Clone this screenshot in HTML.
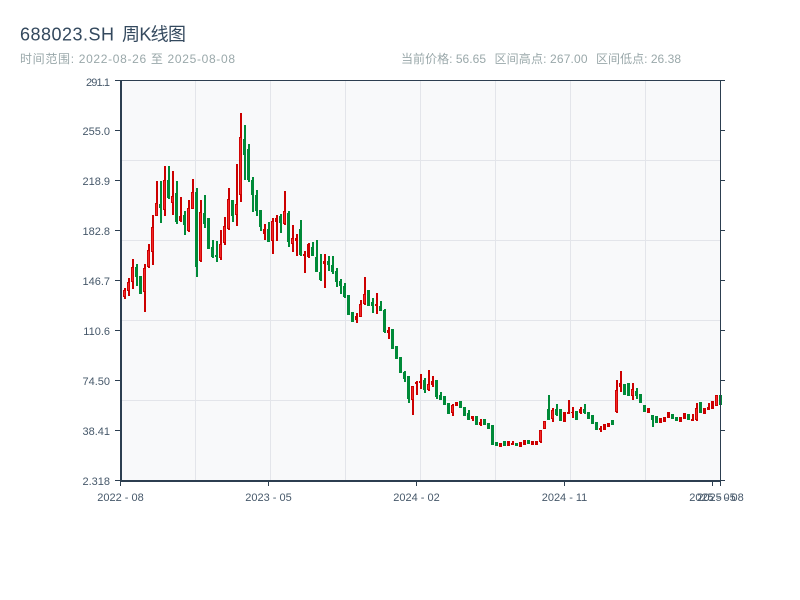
<!DOCTYPE html>
<html><head><meta charset="utf-8"><title>688023.SH 周K线图</title>
<style>
html,body{margin:0;padding:0;background:#fff;width:800px;height:600px;overflow:hidden}
svg{display:block}
text{font-family:"Liberation Sans","Noto Sans CJK SC",sans-serif}
.y{font-size:11px;fill:#46586a;text-anchor:end}
.x{font-size:11px;fill:#46586a;text-anchor:middle}
.s{font-size:12px;fill:#9aa8aa}
.t{font-size:18px;fill:#34495e}
</style></head><body>
<svg width="800" height="600" viewBox="0 0 800 600" xmlns="http://www.w3.org/2000/svg">
<rect width="800" height="600" fill="#fff"/>
<text class="t" x="20" y="40.5" textLength="94">688023.SH</text>
<text class="t" x="122" y="40.5" textLength="64">周K线图</text>
<text class="s" x="20" y="63" textLength="215">时间范围: 2022-08-26 至 2025-08-08</text>
<text class="s" x="401" y="63" textLength="85">当前价格: 56.65</text>
<text class="s" x="494.5" y="63" textLength="93">区间高点: 267.00</text>
<text class="s" x="596" y="63" textLength="85">区间低点: 26.38</text>

<rect x="121" y="81" width="599" height="399" fill="#f8f9fa"/>
<path d="M195.5 81V480M270.5 81V480M345.5 81V480M420.5 81V480M495.5 81V480M570.5 81V480M645.5 81V480M121 160.5H720M121 240.5H720M121 320.5H720M121 400.5H720" stroke="#e3e5ea" stroke-width="1" fill="none"/>

<g fill="none">
<path transform="translate(1 0)" stroke="#cc0000" stroke-width="2" d="M124 288V299M128 278V296M132 259V289M144 264V312M148 244V268M152 215V265M156 181V216M164 166V216M172 171V215M180 197V222M188 200V232M192 179V209M200 200V262M220 230V260M224 217V245M228 188V230M236 164V226M240 113V202M264 224V240M272 218V254M276 215V241M284 191V225M292 225V252M296 234V256M304 251V273M308 243V258M324 254V288M356 313V323M360 300V317M364 277V305M376 293V314M388 327V339M412 386V415M416 381V395M420 374V389M428 370V391M432 376V387M452 404V416M456 402V406M472 416V421M480 419V426M500 443V447M508 441V446M512 441V445M520 442V447M524 440V445M532 441V445M536 441V445M540 430V443M544 421V429M552 408V422M564 412V422M568 400V414M572 407V418M580 407V414M600 426V432M604 424V430M608 423V427M616 380V413M620 371V392M632 383V400M648 408V413M660 418V423M664 417V422M668 412V418M680 417V422M684 413V419M692 414V421M696 403V421M704 408V414M708 403V410M712 401V409M716 395V406"/>
<path transform="translate(0.5 0)" stroke="#cc0000" stroke-width="3" d="M124 290V297M128 282V291M132 267V282M144 268V292M148 250V267M152 227V252M156 203V216M164 180V210M172 196V203M180 216V221M188 208V231M192 192V209M200 212V261M220 244V258M224 226V243M228 199V229M236 204V215M240 137V195M264 229V234M272 221V241M276 218V222M284 211V224M292 238V244M296 238V241M304 254V256M308 244V257M324 261V264M356 316V320M360 304V317M364 294V304M376 304V306M388 330V333M412 386V400M416 382V384M420 381V383M428 384V390M432 381V385M452 405V413M456 402V406M472 416V419M480 422V425M500 443V447M508 441V446M512 443V445M520 442V447M524 440V445M532 441V445M536 441V445M540 430V442M544 421V429M552 410V419M564 412V422M568 412V414M572 412V413M580 409V413M600 428V430M604 424V430M608 423V427M616 390V412M620 383V387M632 389V396M648 408V413M660 418V423M664 417V422M668 412V418M680 417V422M684 413V419M692 419V421M696 408V420M704 408V414M708 407V410M712 401V409M716 395V406"/>
<path transform="translate(0.5 0)" stroke="#f02828" stroke-width="1.2" d="M124 291V296M128 283V290M132 268V281M144 269V291M148 251V266M152 228V251M156 204V215M164 181V209M172 197V202M188 209V230M192 193V208M200 213V260M220 245V257M224 227V242M228 200V228M236 205V214M240 138V194M272 222V240M284 212V223M292 239V243M360 305V316M364 295V303M412 387V399M428 385V389M452 406V412M540 431V441M544 422V428M552 411V418M616 391V411M632 390V395M696 409V419M716 396V405"/>
<path transform="translate(1 0)" stroke="#008a38" stroke-width="2" d="M120 264V295M136 264V286M140 276V294M160 181V223M168 166V199M176 181V224M184 211V235M196 188V277M204 195V228M208 218V249M212 240V258M216 241V262M232 200V222M244 125V180M248 144V182M252 177V212M256 190V216M260 210V231M268 222V242M280 214V233M288 211V247M300 220V256M312 242V256M316 240V272M320 254V281M328 256V271M332 256V274M336 268V287M340 279V294M344 283V298M348 295V315M352 312V322M368 290V306M372 298V313M380 301V311M384 309V333M392 329V349M396 346V359M400 357V373M404 371V382M408 376V403M424 378V393M436 380V399M440 392V400M444 396V405M448 403V414M460 401V408M464 407V416M468 410V420M476 416V425M484 419V425M488 423V429M492 425V445M496 442V446M504 441V446M516 443V446M528 440V444M548 395V420M556 404V416M560 409V421M576 411V420M584 404V414M588 412V419M592 415V424M596 422V430M612 420V425M624 384V395M628 383V396M636 388V399M640 394V403M644 405V412M652 415V427M656 416V423M672 414V419M676 417V421M688 414V420M700 402V413M720 395V405"/>
<path transform="translate(0.5 0)" stroke="#008a38" stroke-width="3" d="M136 267V277M140 276V294M160 204V208M168 180V198M176 193V222M184 215V225M196 192V267M204 213V224M208 218V249M212 247V257M216 255V257M232 200V216M244 139V155M248 149V180M252 180V195M256 195V211M260 210V227M268 229V242M280 216V223M288 213V242M300 229V255M312 247V256M316 257V272M320 272V280M328 261V265M332 265V272M336 271V282M340 281V286M344 286V297M348 295V315M352 312V322M368 290V306M372 302V306M380 306V311M384 310V332M392 329V349M396 346V359M400 357V373M404 372V379M408 376V399M424 380V390M436 380V397M440 395V400M444 396V405M448 403V414M460 401V408M464 407V416M468 413V420M476 416V425M484 419V425M488 423V429M492 425V445M496 442V446M504 441V446M516 443V446M528 440V444M548 409V420M556 409V415M560 409V421M576 411V420M584 409V413M588 412V419M592 415V424M596 422V430M612 420V425M624 384V395M628 383V396M636 391V396M640 394V403M644 405V412M652 415V420M656 416V423M672 414V419M676 417V421M688 414V420M700 402V413M720 395V405"/>
</g>

<rect x="120" y="80" width="601" height="1" fill="#2c3e50"/>
<rect x="720" y="80" width="1" height="402" fill="#2c3e50"/>
<rect x="120" y="80" width="2" height="402" fill="#2c3e50"/>
<rect x="120" y="480" width="601" height="2" fill="#2c3e50"/>
<path stroke="#2c3e50" stroke-width="1" fill="none" d="M115 80.5H120M115 130.5H120M115 180.5H120M115 230.5H120M115 280.5H120M115 330.5H120M115 380.5H120M115 430.5H120M115 480.5H120M721 80.5H725M721 130.5H725M721 180.5H725M721 230.5H725M721 280.5H725M721 330.5H725M721 380.5H725M721 430.5H725M721 480.5H725M120.5 482V486M268.5 482V486M416.5 482V486M564.5 482V486M712.5 482V486M720.5 482V486"/>

<text class="y" x="110" y="86" textLength="24">291.1</text>
<text class="y" x="110" y="135">255.0</text>
<text class="y" x="110" y="185">218.9</text>
<text class="y" x="110" y="235">182.8</text>
<text class="y" x="110" y="285">146.7</text>
<text class="y" x="110" y="335">110.6</text>
<text class="y" x="110" y="385">74.50</text>
<text class="y" x="110" y="435">38.41</text>
<text class="y" x="110" y="485">2.318</text>

<text class="x" x="120.5" y="501">2022<tspan dx="3">-</tspan><tspan dx="3">08</tspan></text>
<text class="x" x="268.5" y="501">2023<tspan dx="3">-</tspan><tspan dx="3">05</tspan></text>
<text class="x" x="416.5" y="501">2024<tspan dx="3">-</tspan><tspan dx="3">02</tspan></text>
<text class="x" x="564.5" y="501">2024<tspan dx="3">-</tspan><tspan dx="3">11</tspan></text>
<text class="x" x="712.5" y="501">2025<tspan dx="3">-</tspan><tspan dx="3">05</tspan></text>
<text class="x" x="720.5" y="501">2025<tspan dx="3">-</tspan><tspan dx="3">08</tspan></text>
</svg>
</body></html>
